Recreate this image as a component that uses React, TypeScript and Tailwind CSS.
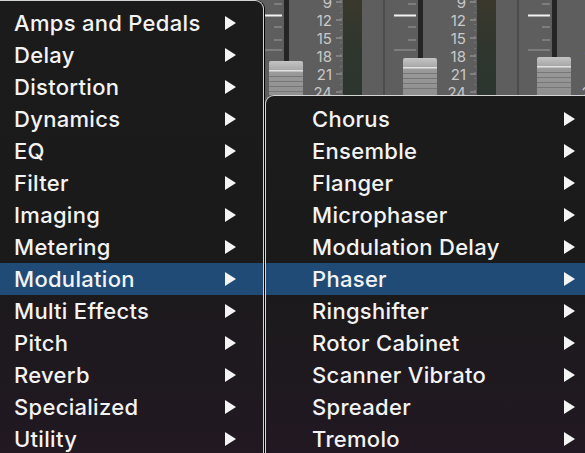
import React from 'react';

const categories = [
  'Amps and Pedals',
  'Delay',
  'Distortion',
  'Dynamics',
  'EQ',
  'Filter',
  'Imaging',
  'Metering',
  'Modulation',
  'Multi Effects',
  'Pitch',
  'Reverb',
  'Specialized',
  'Utility',
];

const modulation = [
  'Chorus',
  'Ensemble',
  'Flanger',
  'Microphaser',
  'Modulation Delay',
  'Phaser',
  'Ringshifter',
  'Rotor Cabinet',
  'Scanner Vibrato',
  'Spreader',
  'Tremolo',
];

function Arrow() {
  return (
    <svg width="11" height="14" viewBox="0 0 11 14" className="shrink-0">
      <polygon points="0,0 11,7 0,14" fill="#f4f4f4" />
    </svg>
  );
}

function MenuRow({ label, active, left }: { label: string; active: boolean; left: boolean }) {
  return (
    <div
      className={`flex items-center justify-between h-[32px] ${left ? 'pl-[14px] pr-[27px]' : 'pl-[46px] pr-[10px]'} ${
        active ? 'bg-[#1f4b76]' : ''
      }`}
    >
      <span className="text-[22px] leading-none font-medium text-[#f3f3f3] tracking-[0.3px]">{label}</span>
      <Arrow />
    </div>
  );
}

// one channel strip of the mixer behind the menus, T = x of the fader track
function Strip({ T, capTop }: { T: number; capTop: number }) {
  const nums = ['9', '12', '15', '18', '21', '24'];
  const ticks = [4, 27, 40, 86];
  return (
    <g>
      <line x1={T - 36} y1={0} x2={T - 36} y2={95} stroke="#4c4c4c" strokeWidth={2} />
      {ticks.map((y) => (
        <line key={y} x1={T - 12} y1={y} x2={T - 4} y2={y} stroke="#888" strokeWidth={1.5} />
      ))}
      <line x1={T - 26} y1={50} x2={T - 4} y2={50} stroke="#888" strokeWidth={1.5} />
      <line x1={T - 26} y1={15.5} x2={T - 4} y2={15.5} stroke="#f2f2f2" strokeWidth={2} />
      <rect x={T - 2} y={0} width={5} height={capTop + 2} fill="#252525" />
      {/* fader cap */}
      <rect x={T - 17} y={capTop} width={34} height={40} rx={2} fill="url(#cap)" />
      <rect x={T - 17} y={capTop + 9} width={34} height={1.5} fill="#e0e0e0" />
      {[15, 20, 25, 30].map((d) => (
        <rect key={d} x={T - 17} y={capTop + d} width={34} height={1} fill="#777" />
      ))}
      {/* dB scale */}
      {nums.map((n, i) => (
        <text
          key={n}
          x={T + 46}
          y={7.5 + i * 18}
          textAnchor="end"
          fontSize="15"
          fill="#c9c9c9"
          fontFamily="Inter, 'Liberation Sans', sans-serif"
        >
          {n}
        </text>
      ))}
      <line x1={T + 55} y1={0} x2={T + 55} y2={95} stroke="#8a8a8a" strokeWidth={1} strokeDasharray="1 5" />
      {nums.map((n, i) => (
        <line key={'t' + n} x1={T + 50} y1={2 + i * 18} x2={T + 56} y2={2 + i * 18} stroke="#999" strokeWidth={1.2} />
      ))}
      {/* meter */}
      <rect x={T + 57} y={0} width={19} height={95} fill="url(#meter)" />
    </g>
  );
}

function Mixer() {
  return (
    <svg width="320" height="95" viewBox="264 0 320 95" className="block">
      <defs>
        <linearGradient id="cap" x1="0" y1="0" x2="0" y2="1">
          <stop offset="0" stopColor="#c4c4c4" />
          <stop offset="0.22" stopColor="#a8a8a8" />
          <stop offset="0.3" stopColor="#999" />
          <stop offset="1" stopColor="#8e8e8e" />
        </linearGradient>
        <linearGradient id="meter" x1="0" y1="0" x2="0" y2="1">
          <stop offset="0" stopColor="#3a382c" />
          <stop offset="0.5" stopColor="#2f362e" />
          <stop offset="1" stopColor="#2b352e" />
        </linearGradient>
      </defs>
      <rect x={264} y={0} width={320} height={95} fill="#5e5e5e" />
      <Strip T={285} capTop={61} />
      <Strip T={419} capTop={58} />
      <Strip T={553} capTop={57} />
    </svg>
  );
}

export default function App() {
  return (
    <div
      className="w-[585px] h-[453px] overflow-hidden flex bg-[#5e5e5e]"
      style={{ fontFamily: "Inter, 'Liberation Sans', sans-serif" }}
    >
      {/* category menu */}
      <div className="w-[264px] h-[470px] shrink-0 rounded-tr-[9px] border-t border-r border-[#d4d4d4] bg-gradient-to-b from-[#1b1b1b] via-[#1a1a1a] to-[#221823] pt-[6px] shadow-[1px_0_0_0_#000] z-10">
        {categories.map((c) => (
          <MenuRow key={c} label={c} active={c === 'Modulation'} left />
        ))}
      </div>
      {/* mixer + submenu */}
      <div className="flex-1 flex flex-col">
        <div className="ml-px">
          <Mixer />
        </div>
        <div className="ml-px flex-1 rounded-tl-[9px] border-t border-l border-[#d4d4d4] bg-gradient-to-b from-[#1b1b1b] via-[#1a1a1a] to-[#221823] pt-[7px]">
          {modulation.map((m) => (
            <MenuRow key={m} label={m} active={m === 'Phaser'} left={false} />
          ))}
        </div>
      </div>
    </div>
  );
}
